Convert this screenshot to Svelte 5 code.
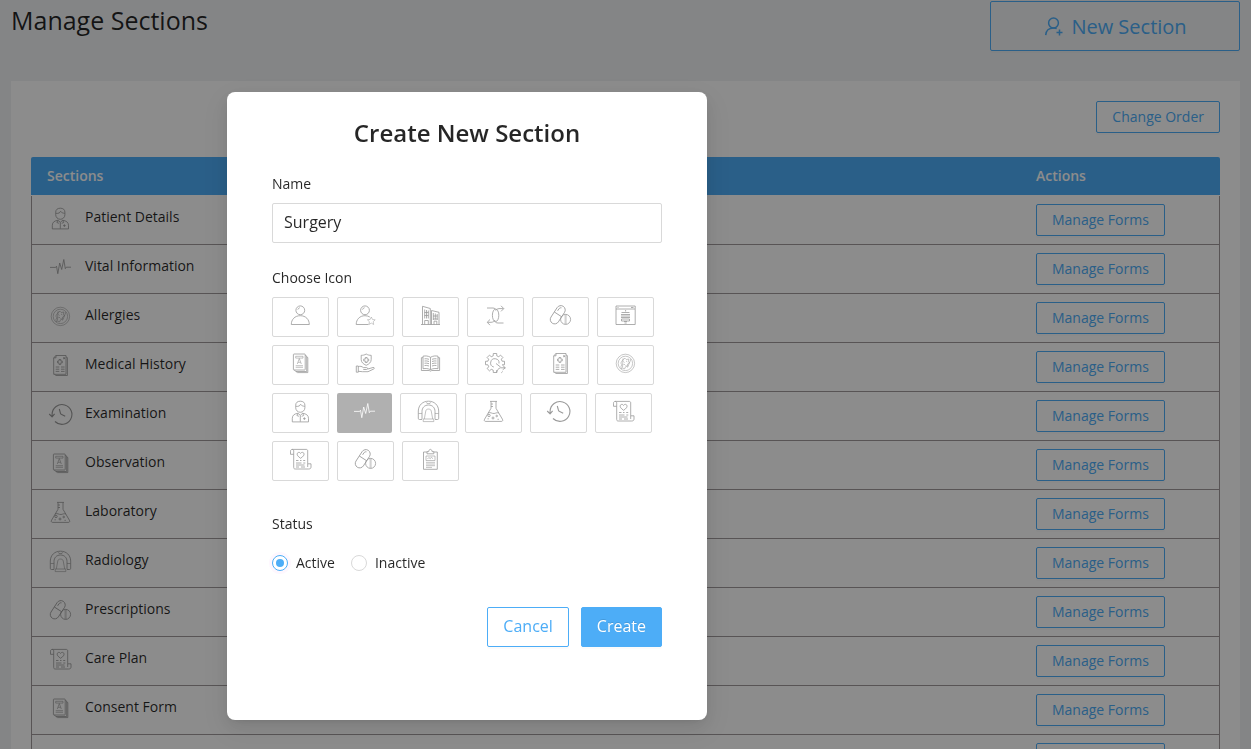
<script>
  // Outline of a cog whose lower-right tooth is left open for the wrench arrow.
  function cog(cx, cy, outer, inner) {
    const points = [];
    for (let tooth = 2; tooth <= 8; tooth++) {
      for (const [offset, radius] of [[-14, inner], [-10, outer], [10, outer], [14, inner]]) {
        const angle = ((tooth * 45 + offset) * Math.PI) / 180;
        points.push(`${(cx + radius * Math.cos(angle)).toFixed(1)} ${(cy + radius * Math.sin(angle)).toFixed(1)}`);
      }
    }
    return `M${points.join('L')}`;
  }

  const icons = {
    user: '<circle cx="12.300" cy="7.300" r="4.400"/><path d="M9.800 6.600q.5-1.500 2-1.900"/><path d="M3.300 21.500c0-5 3.500-8.800 9-8.800s9 3.800 9 8.800z"/>',
    userStar: '<circle cx="12" cy="7.300" r="4.400"/><path d="M9.500 6.600q.5-1.500 2-1.900M15.500 21.500H3.200c0-5 3.500-8.800 8.800-8.800 2 0 3.500.5 4.800 1.300"/><path d="M18.300 14l1.200 2.500 2.700.3-2 1.900.5 2.800-2.400-1.400-2.400 1.400.5-2.800-2-1.900 2.700-.3z" stroke-width=".5"/>',
    building: '<path d="M3 21.500h19M4.500 21.500V3.300l7.800 2.200v16M13.500 21.500V7.500l7.500 1.800v12.200"/><path d="M6.700 6.500v9M8.500 7v8.500M10.300 7.500v8M6.500 9.500h4M6.500 12.500h4M15.300 10v7M17.300 10.500v6M19.200 11v6M15 13h4.500M15 16h4.500M6.700 21.500v-4h3.600v4M16 21.500v-3.300h2.800v3.300"/>',
    transfer: '<path d="M4 5h6c2 .2 2.300 1 2.800 1.700M18 2.800l2.800 2.800-2.800 2.800M20.500 5.600h-4.500c-2 0-3.300 2-3.300 2M20.500 20h-5.500c-2 0-3-1-3.800-2.500M7 16.500l-2.800 2.800L7 22.200M4.500 19.300H8c2 0 3.200-1 4-2"/><ellipse cx="12.600" cy="12.300" rx="3.200" ry="6.300"/>',
    pills: '<g transform="rotate(33 9.750 11.750)"><rect x="5.350" y="1.700" width="8.800" height="20.100" rx="4.400"/><path d="M5.350 11.300h8.800M7.500 8.500V6.300c0-1.200.7-2 1.600-2.400"/></g><circle cx="17.600" cy="16.400" r="5"/><path d="M17.100 11.500v9.800M18.100 11.500v9.800" stroke-width=".5"/>',
    window: '<rect x="3" y="3" width="19.200" height="18.500"/><path d="M3 6h19M4.500 4.500h1M18 4.500h2.500M12.600 7v1.500M11.500 20h2.200"/><path d="M8.500 9.500h8M8 11.500h9M8 13h9M8.500 16h8v2h-8zM8 14.500h9M11 18.500h3"/>',
    book: '<rect x="5.400" y="3" width="11.800" height="16" rx=".6"/><path d="M17.200 4.300l1.500.7v15.500H8l-1.800-1.500M18.700 6l1.100.6v15H9.500L8 20.500"/><path d="M7.700 5.300h7.300v1.800H7.700zM9.300 13l2-5.500 2 5.500M10 11.300h2.600M7.700 14.700h7.300M7.700 16.300h7.300" stroke-width=".6"/>',
    shieldHand: '<path d="M13.200 3c1.700 1.100 3.300 1.300 5 1.300v4.200c0 2.700-2 4.600-5 5.800-3-1.200-5-3.100-5-5.800V4.300c1.700 0 3.300-.2 5-1.300z"/><path d="M12.300 6.500h1.800v1.600h1.600v1.800h-1.600v1.600h-1.800V9.900h-1.600V8.100h1.600z"/><path d="M3.300 15h2v6.200h-2zM5.300 15.700c2-.8 3.500-.4 5 .9h3.200c1.500 0 1.500 1.900 0 1.900h-3.200M14.800 18l5.200-1.500c1.400-.3 2 .9.700 1.500L15 20.700H9.500l-4.200-.4"/>',
    openBook: '<path d="M12.500 6.300C10 4.800 7.500 4.700 5 5.200v12.500c2.700-.4 5.200-.2 7.500 1 2.300-1.200 4.800-1.400 7.500-1V5.200c-2.500-.5-5-.4-7.500 1.100zM12.500 6.300v12.400"/><path d="M5 6.700H3.400v12.800h7.800l1.300.6 1.300-.6h7.800V6.700H20M6.500 7.800c1.500-.2 3-.1 4.500.5M6.500 10c1.500-.2 3-.1 4.500.5M6.500 12.200c1.500-.2 3-.1 4.500.5M6.500 14.500c1.500-.2 3-.1 4.500.5M18.500 7.800c-1.500-.2-3-.1-4.500.5M18.500 10c-1.500-.2-3-.1-4.500.5M18.500 12.200c-1.500-.2-3-.1-4.500.5M18.500 14.500c-1.500-.2-3-.1-4.500.5"/>',
    gear: `<path d="${cog(12, 12, 9.6, 7.3)}"/><path d="M16 12.500a4.200 4.200 0 1 0-5.200 3.500M13 12.500l4.700 3.700M13.600 21.800c.2-2.500 1.700-4.500 4.100-5M18.300 21.800l1.400-1.300M19.500 14.200l2.800 2.600-2.600 2M22.300 16.800h-4.300"/>`,
    report: '<path d="M8 2.500h10v18.800H5.700V4.800z"/><path d="M8 2.500v2.300H5.700M18 4l1.400.6v17.900H8l-1.500-1.200M11 6.500h1.800v1.600h1.500v1.700h-1.500v1.600H11V9.800H9.500V8.100H11zM15.300 4.300l1.300 1.300M16.500 4.300v1.400h-1.500M7.700 14h3.600M13 14h3.600M7.700 16.200h3.600M13 16.200h3.600M7.700 18.400h3.600M13 18.400h3.600"/>',
    virus: '<g stroke-width=".55"><circle cx="12.400" cy="12.400" r="9.200"/><circle cx="12.400" cy="12.400" r="7.200"/><path d="M10 8.500l2-1.300 1.300 1.300 2.500-.5-.3 2.500 1 1.500-2 1.200.2 2-2.200.6-.8 2-2-.7-1.500.5-.2-2.300.8-1.500-1-1.800z"/><path d="M10.500 10.500l1 1M13 10l1.300.8M10.500 13.500h1.500M12.500 15l1-1M18 8l-3.500 8.500M10 7.500l-.5 9"/></g>',
    doctor: '<path d="M7.700 6.200c0-2.500 1.700-4 4.600-4s4.600 1.500 4.600 4v2.500c0 2.500-2 4.600-4.600 4.600s-4.600-2.100-4.600-4.600z"/><path d="M8 7.300c2.500.4 4-.5 4.500-2 1 1.300 2.300 1.900 4.300 2M4.300 22.900v-3.600c0-3 2.200-4.600 5.600-5l2.400 2 2.400-2c3.400.4 5.800 2 5.800 5v3.600zM9.900 14.300l-1 2.200 2 .8M14.700 14.300l1 2.200-2 .8M12.300 16.500v6.200M16.400 18.300v2.600M15.100 19.600h2.600"/>',
    vital: '<path d="M2 12.400h5.700l.8-1.200 1.300 7.500L11.700 8l2 6.500 2.100-10 1.500 9.200 1-1.500H23"/>',
    scanner: '<path d="M6 20.500H3.500c-.8 0-1.200-.4-1.200-1.200V12C2.500 6 6.700 2.200 12.500 2.200S22.500 6 22.700 12v7.300c0 .8-.4 1.200-1.200 1.200H19"/><path d="M6 20v-7.500C6 8.800 8.500 6 12.500 6s6.500 2.800 6.500 6.500V20"/><path d="M8.300 20l1.500-8.200c.3-2.300 5-2.300 5.400 0l1.500 8.200M7.200 20h10.600v2.600H7.200zM10.500 3.200l.5 1.300h3l.5-1.300M2.500 14.500H6M19 14.500h3.500" stroke-width=".6"/>',
    flask: '<path d="M9 2.400h7M10 2.400v6.900L3.600 20.200c-.7 1.300-.2 2.200 1 2.200h15.800c1.200 0 1.700-.9 1-2.200L15 9.300V2.400M6.900 14c2.500-1.300 4 .8 6.200.5 1.800-.2 2.500-1.300 4.700-.5M10 5h2M10 7.500h2"/><circle cx="8" cy="16.500" r="1.200"/><circle cx="15.700" cy="17" r=".8"/><path d="M12 17.500v3M10.500 19h3M6.500 19.800h1.300M16.500 20.300h1.300"/>',
    clock: '<path d="M4.100 14.800V12.300A9.900 9.900 0 1 1 7 19.500M1.200 12l2.900 2.800 2.500-2.900M11.300 7l1.200 4.300q.3.900 1.200 1.300l3.500 1.600" stroke-width="1.100"/>',
    scroll: '<path d="M5.700 7.300H2.500V4.200c0-2.400 3.200-2.400 3.200 0v16.300c0 1 .5 1.500 1.500 1.500h13.500c1.500 0 2.300-.7 2.300-2v-3.200h-3.300V20M4 2.400h14.200c1 0 1.500.6 1.500 1.500v12.900"/><path d="M12.600 11.300C9.700 9.300 9 8.100 9.200 6.800c.3-1.700 2.500-2 3.400-.4.900-1.600 3.100-1.300 3.400.4.200 1.300-.5 2.500-3.400 4.500zM8 13.500h2.500M12 13.500h1.500M15.200 13.500h2M8 16h5.500M15.300 16h2M8 18h8.500M8 20h3M13 20h4"/>',
    clipboard: '<path d="M9 5H5.500v17.300h13.800V5h-3.500"/><path d="M9 6.800V4.600h1.700c.2-3 3.200-3 3.400 0h1.700v2.200z"/><path d="M8 9h9v4.500H8zM9.500 12l1.300-1.500 1.500 1.200 1-1.500 1.700 1.500M8 15.300h9M8 17h9M8 18.700h9M8 20.400h6" stroke-width=".6"/>'
  };

  const choices = [
    'user', 'userStar', 'building', 'transfer', 'pills', 'window',
    'book', 'shieldHand', 'openBook', 'gear', 'report', 'virus',
    'doctor', 'vital', 'scanner', 'flask', 'clock', 'scroll',
    'scroll', 'pills', 'clipboard'
  ];

  const sections = [
    ['Patient Details', 'doctor'],
    ['Vital Information', 'vital'],
    ['Allergies', 'virus'],
    ['Medical History', 'report'],
    ['Examination', 'clock'],
    ['Observation', 'book'],
    ['Laboratory', 'flask'],
    ['Radiology', 'scanner'],
    ['Prescriptions', 'pills'],
    ['Care Plan', 'scroll'],
    ['Consent Form', 'book'],
    ['', 'vital']
  ];

  let name = $state('Surgery');
  let selected = $state(13);
  let status = $state('active');
</script>

{#snippet icon(id)}
  <svg class="icon" viewBox="0 0 25 25" aria-hidden="true">{@html icons[id]}</svg>
{/snippet}

<main class="page">
  <header class="top">
    <h1>Manage Sections</h1>
    <button class="btn new" type="button">
      <svg class="add" viewBox="0 0 20 20" aria-hidden="true">
        <circle cx="10.500" cy="6" r="4.900" />
        <path d="M2.700 18.100c.2-4.300 3.200-7.200 7.800-7.200q1.800 0 3.200.6M16.500 12.500v6M13.500 15.500h6" />
      </svg>
      New Section
    </button>
  </header>

  <section class="card">
    <div class="tools"><button class="btn" type="button">Change Order</button></div>
    <table>
      <thead>
        <tr><th>Sections</th><th class="actions">Actions</th></tr>
      </thead>
      <tbody>
        {#each sections as [label, id]}
          <tr>
            <td><div class="section">{@render icon(id)}<span>{label}</span></div></td>
            <td><button class="btn" type="button">Manage Forms</button></td>
          </tr>
        {/each}
      </tbody>
    </table>
  </section>
</main>

<div class="mask">
  <div class="modal" role="dialog" aria-modal="true" aria-labelledby="dialog-title">
    <h2 id="dialog-title">Create New Section</h2>
    <form onsubmit={(e) => e.preventDefault()}>
      <label class="caption" for="section-name">Name</label>
      <input id="section-name" class="text" type="text" bind:value={name} />

      <div class="caption" id="icon-label">Choose Icon</div>
      <div class="tiles" role="group" aria-labelledby="icon-label">
        {#each choices as id, i}
          <button
            class="tile"
            class:selected={selected === i}
            type="button"
            aria-label={id}
            aria-pressed={selected === i}
            onclick={() => (selected = i)}
          >
            {@render icon(id)}
          </button>
        {/each}
      </div>

      <div class="caption" id="status-label">Status</div>
      <div class="radios" role="radiogroup" aria-labelledby="status-label">
        <label><input type="radio" name="status" value="active" bind:group={status} />Active</label>
        <label><input type="radio" name="status" value="inactive" bind:group={status} />Inactive</label>
      </div>

      <div class="footer">
        <button class="btn large" type="button">Cancel</button>
        <button class="btn large primary" type="submit">Create</button>
      </div>
    </form>
  </div>
</div>

<style>
  :global(body) {
    background: #f0f2f5;
    height: 100vh;
    overflow: hidden;
    font-family: "Open Sans", "Noto Sans", sans-serif;
    font-size: 14px;
    line-height: 22px;
    color: rgba(0, 0, 0, 0.85);
  }

  * {
    box-sizing: border-box;
  }

  button,
  input {
    font: inherit;
    color: inherit;
    margin: 0;
  }

  .page {
    padding: 1px 11px 0;
  }

  .top {
    display: flex;
    justify-content: space-between;
    align-items: flex-start;
    margin-bottom: 30px;
  }

  h1 {
    margin: 0;
    font-size: 25px;
    line-height: 38px;
    font-weight: 400;
  }

  .btn {
    height: 32px;
    padding: 0 15px;
    background: #fff;
    border: 1px solid #4dadf7;
    border-radius: 2px;
    color: #4dadf7;
    box-shadow: 0 2px 0 rgba(0, 0, 0, 0.016);
    white-space: nowrap;
    cursor: pointer;
  }

  .new {
    display: flex;
    align-items: center;
    justify-content: center;
    gap: 8px;
    width: 250px;
    height: 50px;
    padding-top: 2px;
    font-size: 20px;
    background: transparent;
  }

  .add {
    width: 20px;
    height: 20px;
    fill: none;
    stroke: currentColor;
    stroke-width: 1.5;
  }

  .card {
    background: #fff;
    padding: 20px;
  }

  .tools {
    display: flex;
    justify-content: flex-end;
    margin-bottom: 24px;
  }

  table {
    width: 100%;
    border-collapse: separate;
    border-spacing: 0;
    table-layout: fixed;
  }

  th {
    height: 39px;
    padding: 0 16px;
    background: #4dadf7;
    background-clip: padding-box;
    border-bottom: 1px solid #fff;
    color: #fff;
    font-weight: 600;
    text-align: left;
  }

  th:first-child {
    border-top-left-radius: 2px;
  }

  th:last-child {
    border-top-right-radius: 2px;
  }

  .actions {
    width: 200px;
  }

  td {
    padding: 8px 16px;
    border-bottom: 1px solid #a09a9c;
  }

  td:first-child {
    border-left: 1px solid #a09a9c;
  }

  td:last-child {
    border-right: 1px solid #a09a9c;
  }

  td .btn {
    display: block;
  }

  .section {
    display: flex;
    align-items: flex-start;
    gap: 12px;
    height: 28px;
  }

  .icon {
    display: block;
    flex: none;
    width: 25px;
    height: 25px;
    fill: none;
    stroke: #999;
    stroke-width: 0.8;
    stroke-linejoin: round;
  }

  .mask {
    position: fixed;
    inset: 0;
    padding: 92px 0 0 227px;
    background: rgba(0, 0, 0, 0.45);
  }

  .modal {
    width: 480px;
    max-width: 100%;
    padding: 24px 45px 73px;
    background: #fff;
    border-radius: 8px;
    box-shadow:
      0 3px 6px -4px rgba(0, 0, 0, 0.12),
      0 6px 16px rgba(0, 0, 0, 0.08),
      0 9px 28px 8px rgba(0, 0, 0, 0.05);
  }

  h2 {
    margin: 0 0 23px;
    font-size: 24px;
    line-height: 34px;
    font-weight: 600;
    text-align: center;
  }

  .caption {
    display: block;
    margin-bottom: 8px;
  }

  .text {
    display: block;
    width: 100%;
    height: 40px;
    margin-bottom: 24px;
    padding: 0 11px 2px;
    border: 1px solid #d9d9d9;
    border-radius: 2px;
    outline: none;
    font-size: 16px;
  }

  .tiles {
    display: flex;
    flex-wrap: wrap;
    gap: 8px;
    margin-bottom: 32px;
  }

  .tile {
    height: 40px;
    padding: 0 15px 3px;
    background: #fff;
    border: 1px solid #d9d9d9;
    border-radius: 2px;
    cursor: pointer;
  }

  .tile.selected {
    border: 0;
    background: #b0b0b0;
  }

  .tile.selected .icon {
    stroke: #fff;
  }

  .radios {
    display: flex;
    gap: 16px;
    margin: 17px 0 33px;
  }

  .radios label {
    display: flex;
    align-items: center;
    gap: 8px;
  }

  .radios input {
    appearance: none;
    display: grid;
    place-items: center;
    width: 16px;
    height: 16px;
    border: 1px solid #d9d9d9;
    border-radius: 50%;
    outline: none;
  }

  .radios input:checked {
    border-color: #4dadf7;
    box-shadow: 0 0 0 3px rgba(235, 47, 240, 0.04);
  }

  .radios input:checked::before {
    content: "";
    width: 8px;
    height: 8px;
    border-radius: 50%;
    background: #4dadf7;
  }

  .footer {
    display: flex;
    justify-content: flex-end;
    gap: 12px;
  }

  .large {
    height: 40px;
    padding-bottom: 2px;
    font-size: 16px;
  }

  .primary {
    background: #4dadf7;
    color: #fff;
    text-shadow: 0 -1px 0 rgba(0, 0, 0, 0.12);
  }
</style>
